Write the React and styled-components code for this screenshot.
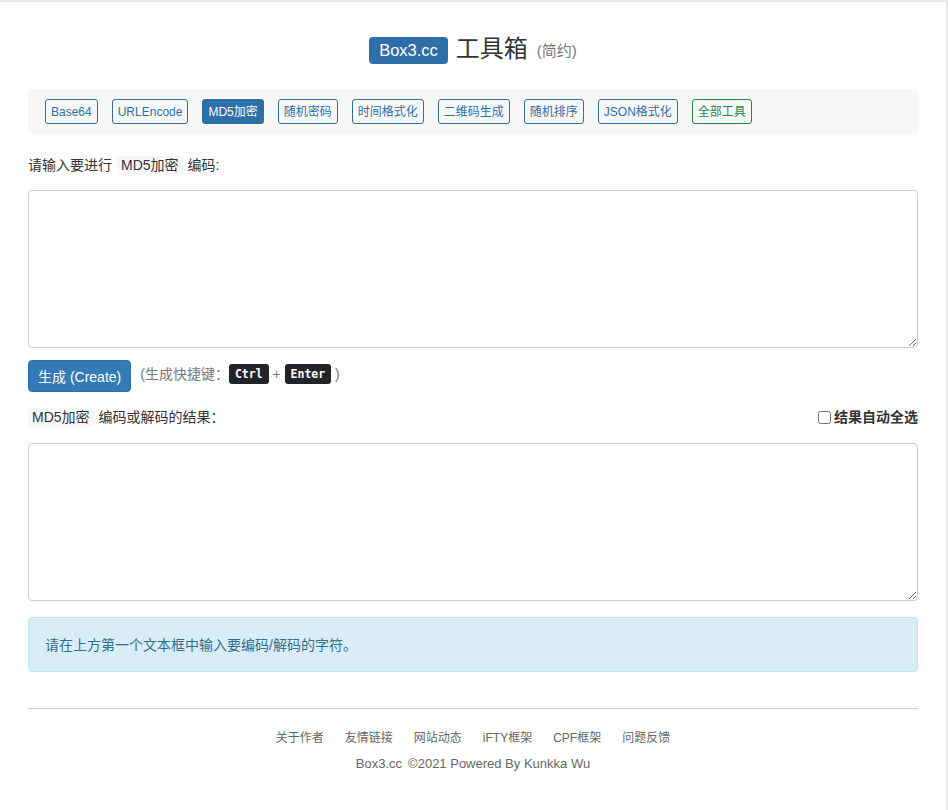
import React, { useState } from "react";
import styled, { createGlobalStyle } from "styled-components";

const GlobalStyle = createGlobalStyle`
  html, body {
    margin: 0;
    padding: 0;
    background: #fff;
  }
  body {
    font-family: "Liberation Sans", "Noto Sans CJK SC", sans-serif;
    font-size: 14px;
    line-height: 20px;
    color: #333;
  }
  * { box-sizing: border-box; }
`;

const Page = styled.div`
  min-height: 810px;
  border-top: 2px solid #e8e8e8;
  border-right: 2px solid #e8e8e8;
`;

const Container = styled.div`
  width: 890px;
  margin: 0 0 0 28px;
`;

const Title = styled.h1`
  display: flex;
  align-items: center;
  justify-content: center;
  gap: 8px;
  margin: 0;
  padding-top: 10px;
  height: 87px;
  font-weight: normal;
  line-height: 1.2;
`;

const Brand = styled.span`
  display: inline-flex;
  align-items: center;
  height: 27px;
  padding: 0 10px;
  background: #2f6fa7;
  color: #fff;
  border-radius: 4px;
  font-size: 16.5px;
`;

const TitleText = styled.span`
  font-size: 24px;
  color: #333;
  margin-top: -2px;
`;

const TitleSub = styled.small`
  font-size: 15px;
  color: #777;
  margin-left: 1px;
`;

const NavBar = styled.nav`
  display: flex;
  align-items: center;
  gap: 14px;
  height: 45px;
  padding: 0 17px;
  background: #f7f7f7;
  border-radius: 4px;
`;

const NavButton = styled.a`
  display: inline-flex;
  align-items: center;
  height: 25px;
  padding: 0 5px;
  font-size: 12px;
  border-radius: 3px;
  border: 1px solid ${(p) => (p.$green ? "#1e8a4c" : "#2f6fa7")};
  color: ${(p) => (p.$active ? "#fff" : p.$green ? "#1e8a4c" : "#2f6fa7")};
  background: ${(p) => (p.$active ? "#2f6fa7" : "transparent")};
  cursor: pointer;
`;

const Label = styled.div`
  display: flex;
  align-items: center;
  justify-content: space-between;
  height: 20px;
  color: #333;
  margin: ${(p) => p.$margin};
`;

const Code = styled.code`
  display: inline-block;
  font-family: inherit;
  font-size: 14px;
  line-height: 19px;
  background: #f7f7f9;
  color: #333;
  padding: 0 4px;
  border-radius: 3px;
  margin: ${(p) => (p.$first ? "0 5px 0 0" : "0 5px")};
`;

const TextArea = styled.textarea`
  display: block;
  width: 100%;
  height: 158px;
  border: 1px solid #ccc;
  border-radius: 4px;
  padding: 6px 12px;
  font-family: inherit;
  font-size: 14px;
  resize: vertical;
  outline: none;
`;

const ActionRow = styled.div`
  display: flex;
  align-items: center;
  gap: 9px;
  margin-top: 12px;
  color: #777;
`;

const PrimaryButton = styled.button`
  height: 32px;
  padding: 0 9px;
  background: #337ab7;
  color: #fff;
  border: 1px solid #2e6da4;
  border-radius: 4px;
  font-family: inherit;
  font-size: 14px;
  cursor: pointer;
`;

const Hint = styled.span`
  display: inline-block;
  margin-top: -4px;
  white-space: pre;
`;

const Kbd = styled.kbd`
  display: inline-block;
  height: 20px;
  line-height: 20px;
  padding: 0 6px;
  vertical-align: middle;
  margin-top: -3px;
  background: #212529;
  color: #fff;
  border-radius: 3px;
  font-family: "DejaVu Sans Mono", monospace;
  font-size: 11.5px;
  font-weight: bold;
`;

const CheckLabel = styled.label`
  display: inline-flex;
  align-items: center;
  gap: 3px;
  font-weight: bold;
  color: #333;
  input {
    margin: 0;
    width: 13px;
    height: 13px;
  }
`;

const Alert = styled.div`
  margin-top: 16px;
  background: #d9edf7;
  border: 1px solid #bce8f1;
  border-radius: 4px;
  color: #31708f;
  padding: 0 16px;
  height: 55px;
  display: flex;
  align-items: center;
`;

const Rule = styled.hr`
  border: 0;
  border-top: 1px solid #ccc;
  margin: 36px 0 0;
`;

const Footer = styled.footer`
  text-align: center;
  color: #666;
  padding-top: 21px;
`;

const FooterLinks = styled.div`
  display: flex;
  justify-content: center;
  gap: 21px;
  font-size: 12px;
  line-height: 17px;
`;

const FooterLink = styled.a`
  color: #666;
  text-decoration: none;
`;

const Copy = styled.div`
  margin-top: 8px;
  font-size: 13px;
  line-height: 18px;
  span { margin-right: 6px; }
`;

const tools = [
  "Base64",
  "URLEncode",
  "MD5加密",
  "随机密码",
  "时间格式化",
  "二维码生成",
  "随机排序",
  "JSON格式化",
];

const links = ["关于作者", "友情链接", "网站动态", "iFTY框架", "CPF框架", "问题反馈"];

const App = () => {
  const [input, setInput] = useState("");
  const [autoSelect, setAutoSelect] = useState(false);

  return (
    <Page>
      <GlobalStyle />
      <Container>
        <Title>
          <Brand>Box3.cc</Brand>
          <TitleText>工具箱</TitleText>
          <TitleSub>(简约)</TitleSub>
        </Title>
        <NavBar>
          {tools.map((t) => (
            <NavButton key={t} $active={t === "MD5加密"}>
              {t}
            </NavButton>
          ))}
          <NavButton $green>全部工具</NavButton>
        </NavBar>

        <Label $margin="21px 0 15px">
          <span>
            请输入要进行<Code>MD5加密</Code>编码:
          </span>
        </Label>
        <TextArea value={input} onChange={(e) => setInput(e.target.value)} />

        <ActionRow>
          <PrimaryButton>生成 (Create)</PrimaryButton>
          <Hint>
            (生成快捷键：<Kbd>Ctrl</Kbd>{" + "}<Kbd>Enter</Kbd>{" )"}
          </Hint>
        </ActionRow>

        <Label $margin="15px 0 16px">
          <span>
            <Code $first>MD5加密</Code>编码或解码的结果：
          </span>
          <CheckLabel>
            <input
              type="checkbox"
              checked={autoSelect}
              onChange={(e) => setAutoSelect(e.target.checked)}
            />
            结果自动全选
          </CheckLabel>
        </Label>
        <TextArea readOnly />

        <Alert>请在上方第一个文本框中输入要编码/解码的字符。</Alert>

        <Rule />
        <Footer>
          <FooterLinks>
            {links.map((l) => (
              <FooterLink key={l}>{l}</FooterLink>
            ))}
          </FooterLinks>
          <Copy>
            <span>Box3.cc</span>©2021 Powered By Kunkka Wu
          </Copy>
        </Footer>
      </Container>
    </Page>
  );
};

export default App;
